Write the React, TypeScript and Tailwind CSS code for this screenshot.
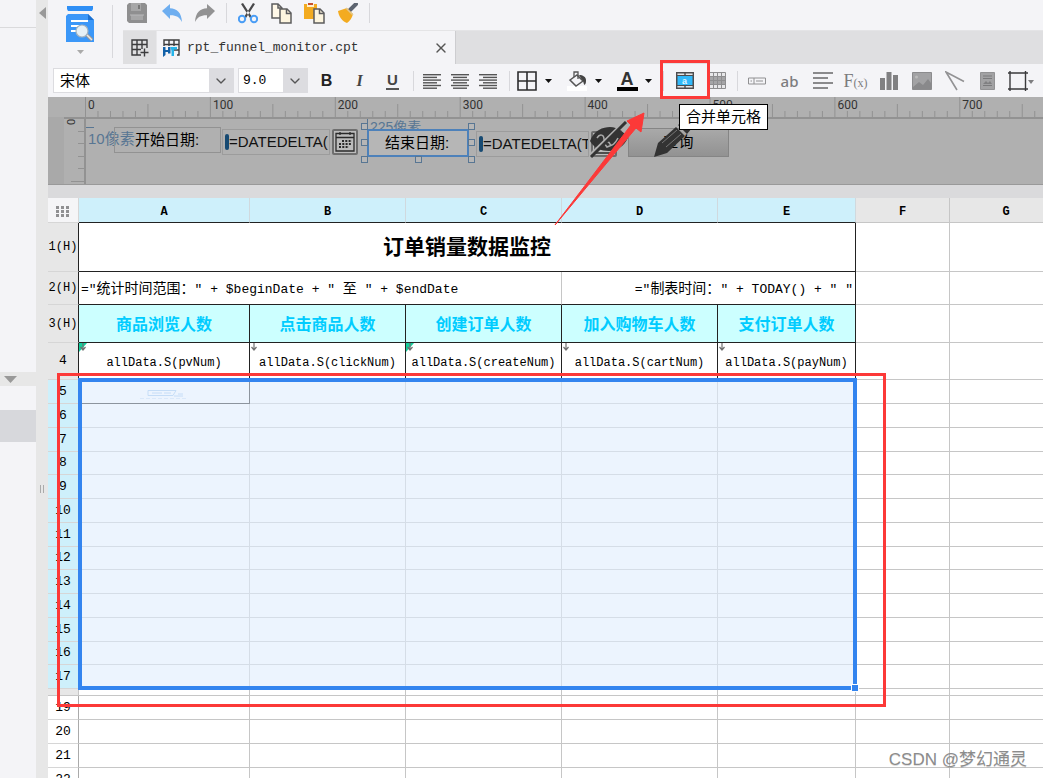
import type { ReactNode } from 'react'
import { ChevronDown, X } from 'lucide-react'
import clsx from 'clsx'

const SANS = "font-['Liberation_Sans','Noto_Sans_CJK_SC',sans-serif]"
const MONO = "font-['Liberation_Mono','Noto_Sans_CJK_SC',monospace]"

const COLUMNS = [
  { name: 'A', title: '商品浏览人数', value: 'allData.S(pvNum)', parent: true },
  { name: 'B', title: '点击商品人数', value: 'allData.S(clickNum)', parent: false },
  { name: 'C', title: '创建订单人数', value: 'allData.S(createNum)', parent: true },
  { name: 'D', title: '加入购物车人数', value: 'allData.S(cartNum)', parent: false },
  { name: 'E', title: '支付订单人数', value: 'allData.S(payNum)', parent: false },
]

const SELECTED_ROWS = Array.from({ length: 13 }, (_, i) => i + 5)
const TAIL_ROWS = [19, 20, 21, 22]

function Separator({ className }: { className: string }) {
  return (
    <span className={clsx('flex shrink-0 justify-center', className)}>
      <span className="w-px bg-[#d8d8dc]" />
    </span>
  )
}

function ToolButton({ label, className, children }: { label: string; className?: string; children: ReactNode }) {
  return (
    <button type="button" aria-label={label} className={clsx('flex shrink-0 items-center justify-center', className ?? 'w-[33px]')}>
      {children}
    </button>
  )
}

function Caret({ label }: { label: string }) {
  return (
    <ToolButton label={label} className="w-5">
      <svg width="7" height="4" viewBox="0 0 7 4">
        <path d="M0 0h7L3.5 4z" fill="#111" />
      </svg>
    </ToolButton>
  )
}

function AlignIcon({ kind }: { kind: 'left' | 'center' | 'right' }) {
  return (
    <svg width="18" height="16" viewBox="0 0 18 16" fill="#555">
      {[0, 1, 2, 3, 4, 5].map((i) => {
        const w = i % 2 === 0 ? 18 : 14
        const x = kind === 'left' ? 0 : kind === 'center' ? (18 - w) / 2 : 18 - w
        return <rect key={i} x={x} y={1 + i * 2.7} width={w} height="1.4" />
      })}
    </svg>
  )
}

function GridFileIcon({ file }: { file?: boolean }) {
  return (
    <svg width="18" height="18" viewBox="0 0 18 18" fill="none" stroke="#3c3c3e" strokeWidth="1.4">
      {file ? (
        <>
          <path d="M1 7V1h15v15h-2M1 5.5h15M6 1v6M11 1v6M11 11h5" />
          <path d="M0 8h2.500v3H5V8h2.500v6.500H5V13H2.500v3L0 18z" fill="#1260a8" stroke="none" />
          <path d="M7.500 8H14v2.500h-3V17H8.500v-5z" fill="#25b4ea" stroke="none" />
        </>
      ) : (
        <path d="M1 9v7h9M1 10V1h15v8M1 5.500h15M1 10.500h9M6 1v15M11 1v9M13.500 9.500v8M9.500 13.500h8" />
      )}
    </svg>
  )
}

function QuickActions() {
  return (
    <div className="flex h-[30px] shrink-0 items-center pb-1">
      <ToolButton label="保存" className="w-7">
        <svg width="20" height="20" viewBox="0 0 20 20">
          <path d="M0 2l2-2h16l2 2v18H2l-2-2z" fill="#8f8f90" />
          <path d="M4 0h10v8H4zM4 12h12v5H4z" fill="#a6a6a7" />
          <path d="M11 2h2v4h-2z" fill="#777" />
          <path d="M3 11.500h14v1H3z" fill="#b9b9ba" />
        </svg>
      </ToolButton>
      <ToolButton label="撤销" className="ml-1 w-[33px]">
        <svg width="20" height="18" viewBox="0 0 20 18">
          <path d="M0 7l8-7v4.200C15 4.500 19.500 8.500 20 18c-2.500-5-6-7-12-6.800V15z" fill="#6eaef0" />
        </svg>
      </ToolButton>
      <ToolButton label="重做">
        <svg width="20" height="18" viewBox="0 0 20 18">
          <path d="M20 7l-8-7v4.200C5 4.500.5 8.500 0 18c2.500-5 6-7 12-6.800V15z" fill="#929293" />
        </svg>
      </ToolButton>
      <Separator className="h-5 w-[10px]" />
      <ToolButton label="剪切">
        <svg width="20" height="21" viewBox="0 0 20 21">
          <path d="M3 1l2-1 9 14-2 1zM17 1l-2-1L6 14l2 1z" fill="#48484a" />
          <circle cx="4" cy="16" r="3.200" fill="none" stroke="#4a9df5" strokeWidth="2" />
          <circle cx="16" cy="16" r="3.200" fill="none" stroke="#4a9df5" strokeWidth="2" />
        </svg>
      </ToolButton>
      <ToolButton label="复制" className="w-[34px]">
        <svg width="21" height="21" viewBox="0 0 21 21" fill="#fff8e8" stroke="#5c5c5e" strokeWidth="1.500">
          <path d="M1 1h6l4 4v10H1z" />
          <path d="M7 1v4h4" fill="none" />
          <path d="M9 6h7l4 4v10H9z" fill="#fdf5df" />
          <path d="M15.500 6v4.500H20" fill="none" />
        </svg>
      </ToolButton>
      <ToolButton label="粘贴">
        <svg width="21" height="21" viewBox="0 0 21 21">
          <path d="M0 1h13v15H0z" fill="#f3ab20" />
          <path d="M3 1h7v3H3z" fill="#fff1d0" />
          <path d="M4 0h5v2H4z" fill="#c8502c" />
          <path d="M10 6h6l4 4v10H10z" fill="#fdf5df" stroke="#5c5c5e" strokeWidth="1.500" />
          <path d="M15.500 6v4.500H20" fill="none" stroke="#5c5c5e" strokeWidth="1.500" />
        </svg>
      </ToolButton>
      <ToolButton label="格式刷">
        <svg width="20" height="20" viewBox="0 0 20 20">
          <path d="M12 7l6-6" stroke="#5d6470" strokeWidth="4" strokeLinecap="round" />
          <path d="M0 8l9-3 6 6c-1 4-3 7-6 9C4 18 1 14 0 8z" fill="#f3ab20" />
          <path d="M8 5l7 7" stroke="#e2c68d" strokeWidth="1.500" />
        </svg>
      </ToolButton>
      <Separator className="h-5 w-[10px]" />
    </div>
  )
}

function FileTabs() {
  return (
    <div className="flex h-[34px] shrink-0 border-t border-[#e4e4e6] bg-[#dfdfe1]">
      <ToolButton label="新建报表" className="w-[34px] border-r border-[#e8e8ea]">
        <GridFileIcon />
      </ToolButton>
      <div className="flex w-[299px] shrink-0 items-center border-r border-[#cdcdd0] bg-[#f4f4f7] pl-1.5">
        <GridFileIcon file />
        <span className={clsx(MONO, 'ml-1.5 grow text-[13px] text-[#333]')}>rpt_funnel_monitor.cpt</span>
        <button type="button" aria-label="关闭" className="mr-1.5">
          <X className="size-4 text-[#555]" strokeWidth={2} />
        </button>
      </div>
    </div>
  )
}

function SelectBox({ label, value, className }: { label: string; value: string; className: string }) {
  return (
    <div className={clsx('relative flex h-[25px] shrink-0 border border-[#dcdce0] bg-white', className)}>
      <select aria-label={label} className="min-w-0 grow appearance-none bg-transparent leading-5 text-black outline-none">
        <option>{value}</option>
      </select>
      <span className="pointer-events-none flex w-6 items-center justify-center bg-[#dcdce0]">
        <ChevronDown className="size-4 text-[#555]" />
      </span>
    </div>
  )
}

function FormatBar() {
  return (
    <div className="flex h-[33px] shrink-0 items-center bg-[#f4f4f7] pl-[5px]">
      <SelectBox label="字体" value="宋体" className="w-[181px] pl-1.5 text-[15px]" />
      <SelectBox label="字号" value="9.0" className={clsx(MONO, 'mr-0.5 ml-1 w-[70px] pl-1 text-[13px]')} />
      <ToolButton label="加粗">
        <span className="text-base font-bold text-[#222]">B</span>
      </ToolButton>
      <ToolButton label="倾斜">
        <span className="font-['Liberation_Serif',serif] text-base font-bold text-[#444] italic">I</span>
      </ToolButton>
      <ToolButton label="下划线">
        <span className="border-b-2 border-[#555] px-px text-[15px] leading-4 font-bold text-[#444]">U</span>
      </ToolButton>
      <Separator className="h-5 w-[9px]" />
      <ToolButton label="左对齐" className="w-7"><AlignIcon kind="left" /></ToolButton>
      <ToolButton label="居中" className="w-7"><AlignIcon kind="center" /></ToolButton>
      <ToolButton label="右对齐" className="w-7"><AlignIcon kind="right" /></ToolButton>
      <Separator className="h-5 w-[14px]" />
      <ToolButton label="边框" className="w-[22px]">
        <svg width="20" height="20" viewBox="0 0 20 20" fill="none" stroke="#2c2c2e" strokeWidth="1.600">
          <path d="M1 1h18v18H1zM10 1v18M1 10h18" />
        </svg>
      </ToolButton>
      <Caret label="边框选项" />
      <ToolButton label="填充色" className="ml-2 w-[22px]">
        <svg width="20" height="20" viewBox="0 0 20 20">
          <path d="M0 15h20v5H0z" fill="#fff" />
          <path d="M3 9l7-5 6 6-7 5z" fill="none" stroke="#555" strokeWidth="1.500" />
          <path d="M7 6V1h4v7" fill="none" stroke="#555" strokeWidth="1.300" />
          <path d="M12 4c4 0 7 2 7 5 0 2 0 4-1.500 5-1.500-2-.5-4-3-6z" fill="#444" />
        </svg>
      </ToolButton>
      <Caret label="填充色选项" />
      <ToolButton label="字体颜色" className="ml-2 w-[22px]">
        <span className="border-b-4 border-black px-1 text-lg leading-4 font-bold text-[#333]">A</span>
      </ToolButton>
      <Caret label="字体颜色选项" />
      <Separator className="h-5 w-[10px]" />
      <div className="relative z-20 shrink-0">
        <ToolButton label="合并单元格">
          <svg width="18" height="17" viewBox="0 0 18 17">
            <path d="M.7.700h16.600v15.600H.7zM9 1v3M9 13v3" fill="#e4e4e6" stroke="#4c4c4e" strokeWidth="1.400" />
            <path d="M1 3.500h16v10H1z" fill="#30b8fa" stroke="#4c4c4e" />
            <text x="6" y="11.500" fontSize="9" fontWeight="bold" fill="#dff6ff">a</text>
          </svg>
        </ToolButton>
        <div className="pointer-events-none absolute -top-3 -left-2 h-[39px] w-[50px] border-[3px] border-[#fc3938]" />
        <div role="tooltip" className="absolute top-8 left-[11px] h-[26px] border border-black bg-white px-1.5 text-[15px] leading-6 whitespace-nowrap text-black">
          合并单元格
        </div>
      </div>
      <ToolButton label="取消合并">
        <svg width="17" height="17" viewBox="0 0 17 17" fill="#e8e8ea" stroke="#8e8e90">
          <path d="M.5.500h16v16H.5z" />
          <path d="M.5 4.500h16v8H.5z" fill="#a5a5a7" />
          <path d="M.5 8.500h16M4.500.500v16M8.500.500v16M12.500.500v16" />
        </svg>
      </ToolButton>
      <Separator className="h-5 w-[6px]" />
      <ToolButton label="控件">
        <svg width="18" height="8" viewBox="0 0 18 8" fill="none" stroke="#909092">
          <path d="M.5 1h17v6H.5zM6 1v6M8 4h7M2.500 4h1.500" />
        </svg>
      </ToolButton>
      <ToolButton label="文本">
        <span className="font-['Noto_Sans',sans-serif] text-[15px] leading-5 font-medium text-[#7c7c7e]">ab</span>
      </ToolButton>
      <ToolButton label="富文本">
        <svg width="20" height="18" viewBox="0 0 20 18" fill="#8a8a8c">
          <path d="M0 0h20v2H0zM0 5h15v2H0zM0 10h20v2H0zM0 15h15v2H0z" />
        </svg>
      </ToolButton>
      <ToolButton label="公式">
        <span className="font-['Liberation_Serif',serif] text-lg leading-5 text-[#7c7c7e]">F<span className="text-xs">(x)</span></span>
      </ToolButton>
      <ToolButton label="图表">
        <svg width="18" height="18" viewBox="0 0 18 18" fill="#808082">
          <path d="M0 6h5v12H0zM6.500 0h5v18h-5zM13 3h5v15h-5z" />
        </svg>
      </ToolButton>
      <ToolButton label="图片">
        <svg width="20" height="18" viewBox="0 0 20 18">
          <path d="M.5.500h19v17H.5z" fill="#a2a2a4" stroke="#8b8b8d" />
          <path d="M1 15l6-5 4 3 5-6 3 4v6H1z" fill="#89898b" />
          <circle cx="4.500" cy="5" r="1.500" fill="#bbb" />
        </svg>
      </ToolButton>
      <ToolButton label="斜线">
        <svg width="20" height="20" viewBox="0 0 20 20" fill="none" stroke="#929294" strokeWidth="1.600">
          <path d="M12 19L1 1l18 9.500" />
        </svg>
      </ToolButton>
      <ToolButton label="子报表">
        <svg width="15" height="18" viewBox="0 0 15 18">
          <path d="M.5.500h14v17H.5z" fill="#a2a2a4" stroke="#929294" />
          <path d="M3 4h9M3 6.500h9M3 13.500h9" stroke="#7a7a7c" />
          <path d="M3 12l3-3 2 2 2-2 2 3z" fill="#808082" />
        </svg>
      </ToolButton>
      <ToolButton label="悬浮元素" className="ml-1 w-[26px]">
        <svg width="26" height="20" viewBox="0 0 26 20">
          <path d="M2 0v20M17.500 0v20M0 2h20M0 18h20" stroke="#3a3a3c" strokeWidth="1.400" />
          <path d="M20 9h6l-3 4z" fill="#7e7e80" />
        </svg>
      </ToolButton>
    </div>
  )
}

function HorizontalRuler() {
  const ticks = Array.from({ length: 160 }, (_, i) => i)
  return (
    <svg width="2000" height="20" className="shrink-0">
      {ticks.map((i) => (
        <path key={i} d={`M${i * 12.49 + 0.5} ${i % 10 === 0 ? 0 : i % 5 === 0 ? 7 : 14}V20`} stroke="#929292" />
      ))}
      {[0, 1, 2, 3, 4, 5, 6, 7].map((i) => (
        <text key={i} x={i * 124.9 + 3} y="12" fontSize="12" fill="#333" fontFamily="Roboto, sans-serif">
          {i * 100}
        </text>
      ))}
    </svg>
  )
}

function CalendarIcon() {
  return (
    <svg width="20" height="20" viewBox="0 0 20 20" fill="none" stroke="#2a2a2a" strokeWidth="1.300">
      <path d="M1 1.500h18V19H1zM1 5.500h18M5 0v3M15 0v3" />
      <path d="M7 9h10M4 12h13M4 15h10" strokeWidth="2" strokeDasharray="2 1.300" />
    </svg>
  )
}

function DateField({ id, value, className }: { id: string; value: string; className: string }) {
  return (
    <div className={clsx('absolute flex h-[26px]', className)}>
      <div className="flex min-w-0 grow items-center border border-[#9c9c9c] pl-0.5">
        <span className="h-4 w-1 shrink-0 rounded-sm bg-[#174a72]" />
        <input id={id} readOnly value={value} className="w-full min-w-0 bg-transparent text-[15px] text-[#111] outline-none" />
      </div>
      <button type="button" aria-label="选择日期" className="ml-0.5 flex w-[26px] shrink-0 items-center justify-center rounded-xs border-2 border-[#6e6e6e] bg-[#bcbcbc]">
        <CalendarIcon />
      </button>
    </div>
  )
}

const HANDLES = ['left-0 top-0', 'left-0 top-4', 'left-0 bottom-0', 'right-0 top-0', 'right-0 top-4', 'right-0 bottom-0', 'left-[54px] bottom-0']

/** Parameter panel: widgets are placed freely on the canvas. */
function ParameterPane() {
  return (
    <div className="h-[88px] shrink-0 overflow-hidden border-b border-[#999] bg-[#b0b0b0]">
      <div className="flex h-5 pl-[37px]">
        <HorizontalRuler />
      </div>
      <div className="flex h-[68px]">
        <div className="w-4 shrink-0 bg-[#a9a9a9]" />
        <svg width="22" height="68" className="shrink-0 border-t-2 border-r-2 border-[#929292] bg-[#b0b0b0]">
          <path d="M14 12.500h8M14 24.500h8M14 37.500h8M14 49.500h8M7 62.500h15" stroke="#929292" />
          <text x="-6" y="11" transform="rotate(-90)" fontSize="11" fill="#333" fontFamily="Roboto, sans-serif">0</text>
        </svg>
        <div className="relative grow border-t-2 border-[#929292]">
          <span className="absolute top-2 left-0 w-2 border-t border-[#587693]" />
          <span className="absolute top-2 left-0.5 text-[15px] leading-6 text-[#587693]">10像素</span>
          <label htmlFor="begin-date" className="absolute top-2 left-7 h-[26px] w-[107px] border border-[#929292] pl-5 text-[15px] leading-6 text-black">
            开始日期:
          </label>
          <DateField id="begin-date" value="=DATEDELTA(" className="top-[10px] left-[136px] w-[136px]" />
          <span className="absolute top-0 left-[281px] border-l border-[#587693] pl-0.5 text-sm leading-4 text-[#587693]">225像素</span>
          <div className="absolute top-1 left-[275px] h-10 w-[114px]">
            <label htmlFor="end-date" className="absolute inset-1.5 border-2 border-[#4d81ba] bg-[#b6b6b6] pl-4 text-[15px] leading-6 text-black">
              结束日期:
            </label>
            {HANDLES.map((pos) => (
              <span key={pos} className={clsx('absolute size-[7px] border border-[#587693] bg-[#b6b6b6]', pos)} />
            ))}
          </div>
          <DateField id="end-date" value="=DATEDELTA(T" className="top-3 left-[390px] w-[141px]" />
          <button type="button" className="absolute top-[9px] left-[542px] h-[29px] w-[101px] border border-[#858585] bg-linear-to-b from-[#a9a9a9] to-[#929292] text-[15px] text-black">
            查询
          </button>
          <svg width="42" height="38" viewBox="0 0 42 38" className="absolute top-0.5 left-[503px]">
            <path d="M1 20C5 9 14 6 21 6c8 0 14 5 18 11-4 8-11 13-19 13C12 30 5 27 1 20z" fill="#333" />
            <path d="M8 17c3-5 7-3 7 1s5 1 6 5 6-2 8-6M10 25l5-3 3 4 5-2" fill="none" stroke="#aaa" strokeWidth="1.500" />
            <path d="M2 33L36 0" stroke="#b0b0b0" strokeWidth="2.500" />
            <path d="M2 36L37 1" stroke="#333" strokeWidth="3" />
          </svg>
          <svg width="38" height="38" viewBox="0 0 38 38" className="absolute top-0 left-[568px]">
            <path d="M0 38l4-14L22 8l9 9-18 17zM24 6l6-5 8 8-5 6z" fill="#333" />
            <path d="M8 24l15-13M12 28l15-13" stroke="#777" strokeWidth="1" />
          </svg>
        </div>
      </div>
    </div>
  )
}

function CellMarker({ parent }: { parent: boolean }) {
  return (
    <svg width="9" height="9" viewBox="0 0 9 9" className="absolute top-0 left-0">
      {parent && <path d="M0 0h8L0 9z" fill="#12cf9c" />}
      <path d="M4 0v7M1.500 4L4 7l2.500-3" fill="none" stroke="#707070" strokeWidth="1.200" />
    </svg>
  )
}

const gridLine = 'border-r border-b border-[#c6c6c6]'
const inkLine = 'border-r border-b border-[#222]'
const headCell = 'border-b border-b-[#d6d6d6] border-r font-normal'

function Sheet() {
  return (
    <div className="relative grow overflow-hidden bg-white">
      <table className={clsx(MONO, 'w-full table-fixed border-separate border-spacing-0 text-center leading-4 text-black [&_td]:p-0 [&_td]:pt-1 [&_th]:p-0 [&_thead_th]:pt-1')}>
        <colgroup>
          <col className="w-[31px]" />
          <col className="w-[171px]" />
          <col className="w-[156px]" />
          <col className="w-[156px]" />
          <col className="w-[156px]" />
          <col className="w-[138px]" />
          <col className="w-[94px]" />
          <col className="w-[113px]" />
          <col />
        </colgroup>
        <thead className="text-xs font-bold">
          <tr>
            <th className="h-[25px] border-r border-b border-[#d6d6d6] bg-[#f5f5f7]">
              <svg width="14" height="12" viewBox="0 0 14 12" className="mx-auto" fill="#909092">
                {[0, 5, 10].map((x) => [0, 4, 8].map((y) => <rect key={`${x}-${y}`} x={x} y={y} width="3" height="3" />))}
              </svg>
            </th>
            {COLUMNS.map((col) => (
              <th key={col.name} className="border-r border-b border-r-[#d0d9de] border-b-[#222] bg-[#cef0fb]">{col.name}</th>
            ))}
            <th className="border-r border-b border-[#c6c6c6] bg-[#e7e7e7]">F</th>
            <th className="border-r border-b border-[#c6c6c6] bg-[#e7e7e7]">G</th>
            <th className="border-b border-[#c6c6c6] bg-[#e7e7e7]" />
          </tr>
        </thead>
        <tbody className="text-xs">
          <tr>
            <th className={clsx(headCell, 'h-[49px] border-r-[#222] bg-[#e7e7e7]')}>1(H)</th>
            <td colSpan={5} className={clsx(inkLine, 'text-[21px] leading-6 font-bold')}>订单销量数据监控</td>
            <td className={gridLine} />
            <td className={gridLine} />
            <td className={gridLine} />
          </tr>
          <tr>
            <th className={clsx(headCell, 'h-[33px] border-r-[#222] bg-[#e7e7e7]')}>2(H)</th>
            <td colSpan={3} className="border-r border-b border-r-[#c6c6c6] border-b-[#222] text-left text-[13px] whitespace-nowrap">
              <div className="pl-0.5">
                ="<span className="text-sm leading-4">统计时间范围：</span>" + $beginDate + " <span className="text-sm leading-4">至</span> " + $endDate
              </div>
            </td>
            <td colSpan={2} className={clsx(inkLine, 'text-right text-[13px] whitespace-nowrap')}>
              <div className="pr-0.5">
                ="<span className="text-sm leading-4">制表时间：</span>" + TODAY() + " "
              </div>
            </td>
            <td className={gridLine} />
            <td className={gridLine} />
            <td className={gridLine} />
          </tr>
          <tr>
            <th className={clsx(headCell, 'h-[38px] border-r-[#222] bg-[#e7e7e7]')}>3(H)</th>
            {COLUMNS.map((col) => (
              <td key={col.name} className={clsx(inkLine, 'bg-[#ccffff] text-base leading-5 font-bold text-[#00ccff]')}>{col.title}</td>
            ))}
            <td className={gridLine} />
            <td className={gridLine} />
            <td className={gridLine} />
          </tr>
          <tr>
            <th className={clsx(headCell, 'h-[37px] border-r-[#222] bg-[#e7e7e7] text-[13px]')}>4</th>
            {COLUMNS.map((col) => (
              <td key={col.name} className={clsx(inkLine, 'relative')}>
                <CellMarker parent={col.parent} />
                {col.value}
              </td>
            ))}
            <td className={gridLine} />
            <td className={gridLine} />
            <td className={gridLine} />
          </tr>
          {SELECTED_ROWS.map((n, i) => (
            <tr key={n}>
              <th className={clsx(headCell, 'border-r-[#c6c6c6] bg-[#cef0fb] text-[13px]', i % 4 === 3 ? 'h-[23px]' : 'h-6')}>{n}</th>
              <td className={n === 5 ? 'border-r border-b border-[#111]' : gridLine}>
                {n === 5 && (
                  <svg width="48" height="10" viewBox="0 0 48 10" className="mx-auto" fill="none" stroke="#9fc6ee">
                    <path d="M8 1.500h28l-3 5H8zM12 4h10M24 4h7M38 5h5M34 7h9" />
                    <path d="M0 9.500h48" strokeDasharray="4 2" opacity=".5" />
                  </svg>
                )}
              </td>
              {[1, 2, 3, 4, 5, 6, 7].map((c) => <td key={c} className={gridLine} />)}
            </tr>
          ))}
          <tr>
            <th className="h-[7px] border-r border-b border-[#c6c6c6] bg-[#e7e7e7]" />
            {[0, 1, 2, 3, 4, 5, 6, 7].map((c) => <td key={c} className={gridLine} />)}
          </tr>
          {TAIL_ROWS.map((n) => (
            <tr key={n}>
              <th className={clsx(headCell, 'h-6 border-r-[#aaa] text-[13px]')}>{n}</th>
              {[0, 1, 2, 3, 4, 5, 6, 7].map((c) => <td key={c} className={gridLine} />)}
            </tr>
          ))}
        </tbody>
      </table>
      <div className="pointer-events-none absolute top-[180px] left-[30px] h-[312px] w-[779px] border-4 border-[#3384ef] bg-[#e0edfd]/60">
        <span className="absolute -right-1.5 -bottom-1.5 size-2 border border-white bg-[#3384ef]" />
      </div>
      <div className="pointer-events-none absolute top-[175px] left-[9px] h-[334px] w-[829px] border-[3px] border-[#fc3938]" />
    </div>
  )
}

function SidePanel() {
  return (
    <aside className="flex w-9 shrink-0 flex-col bg-[#f4f4f7]">
      <div className="h-7 shrink-0 border-b border-[#dadadc]" />
      <div className="h-[344px] shrink-0" />
      <button type="button" aria-label="收起" className="flex h-[14px] shrink-0 items-center bg-[#e7e7e7] pl-1">
        <svg width="13" height="7" viewBox="0 0 13 7">
          <path d="M0 0h13L6.500 7z" fill="#999" />
        </svg>
      </button>
      <div className="h-6 shrink-0" />
      <div className="h-8 shrink-0 bg-[#d7d8dc]" />
    </aside>
  )
}

export default function App() {
  return (
    <div className={clsx(SANS, 'relative flex h-screen overflow-hidden bg-[#e7e7e7]')}>
      <SidePanel />
      <div className="flex w-3 shrink-0 flex-col items-center">
        <svg width="7" height="12" viewBox="0 0 7 12" className="mt-[7px]">
          <path d="M7 0v12L0 6z" fill="#999" />
        </svg>
        <div className="mt-[466px] h-2 w-1 border-x border-[#aaa]" />
      </div>
      <main className="flex min-w-0 grow flex-col overflow-hidden">
        <header className="flex h-16 shrink-0 bg-[#f4f4f7]">
          <div className="flex w-[75px] shrink-0">
            <button type="button" aria-label="预览" className="flex w-16 flex-col items-center gap-2 pt-1.5">
              <svg width="28" height="36" viewBox="0 0 28 36" className="shrink-0">
                <path d="M1 0h26v3l-1 2H2L1 3z" fill="#2f8ff5" />
                <path d="M0 10l2-2h20l6 6v22H0z" fill="#3b97f8" />
                <path d="M22 8v6h6z" fill="#1b70d0" />
                <path d="M5 15h17M5 20h8M5 25h7" stroke="#fff" strokeWidth="2" />
                <circle cx="16" cy="25" r="6" fill="#e6f0f6" stroke="#a5b3be" strokeWidth="1.200" />
                <path d="M21 29l5 5" stroke="#9a9a9a" strokeWidth="3.500" />
                <path d="M21 29l5 5" stroke="#e8e8e8" strokeWidth="1.500" />
              </svg>
              <svg width="7" height="4" viewBox="0 0 7 4">
                <path d="M0 0h7L3.500 4z" fill="#aaa" />
              </svg>
            </button>
            <div className="mt-[5px] h-[53px] w-px bg-[#d8d8dc]" />
          </div>
          <div className="flex min-w-0 grow flex-col">
            <QuickActions />
            <FileTabs />
          </div>
        </header>
        <FormatBar />
        <ParameterPane />
        <div className="h-[13px] shrink-0 bg-[#dadadc]" />
        <Sheet />
      </main>
      <svg width="92" height="114" viewBox="0 0 92 114" className="pointer-events-none absolute top-[112px] left-[554px] z-10">
        <path d="M1 113L77 13l-4-4L90 1l-3 19-5-4z" fill="#fc3938" stroke="#fc3938" />
      </svg>
      <div className="pointer-events-none absolute right-4 bottom-1.5 text-[17px] leading-6 text-[#8c8c8c] text-shadow-2xs">CSDN @梦幻通灵</div>
    </div>
  )
}
